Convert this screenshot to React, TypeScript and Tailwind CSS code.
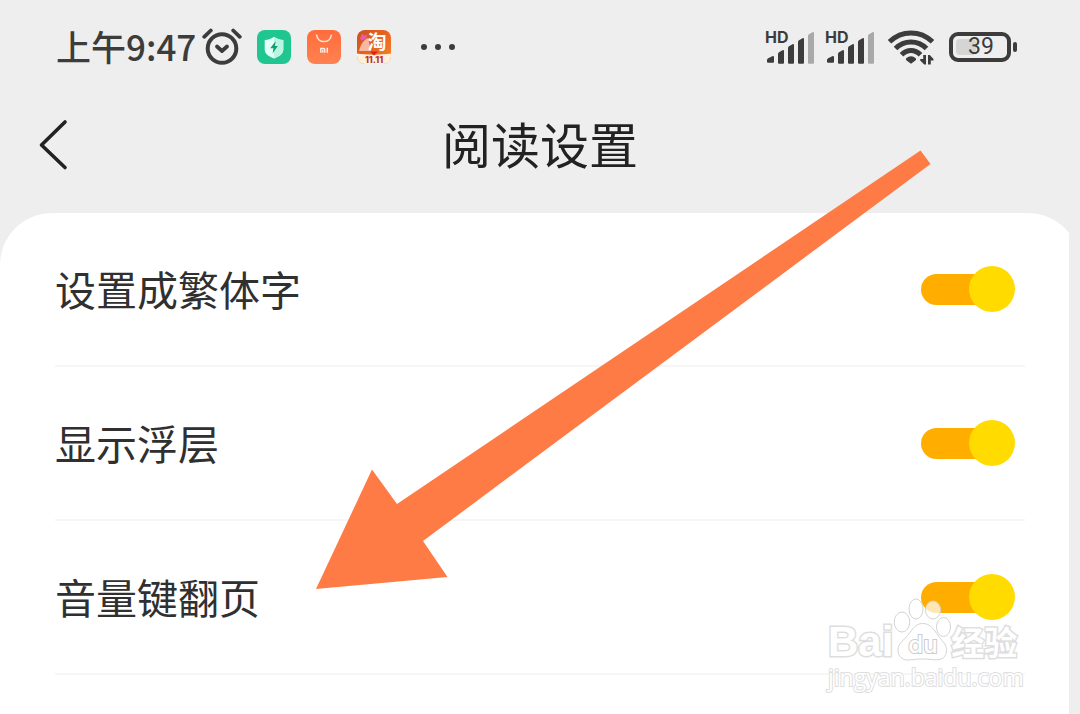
import { useId, useState } from "react";

const rows = ["设置成繁体字", "显示浮层", "音量键翻页"];

function AlarmIcon() {
  return (
    <svg viewBox="0 0 40 38" className="h-[38px] w-10 shrink-0" fill="none" stroke="#3c3c3c" strokeLinecap="round" strokeLinejoin="round" aria-hidden="true">
      <circle cx="20" cy="20.500" r="14.300" strokeWidth="4" />
      <path d="M15 18.500l5 4.500 5-4.500" strokeWidth="3.800" />
      <path d="M2.200 8.800L8.800 2.500M37.800 8.800L31.200 2.500" strokeWidth="3.800" />
    </svg>
  );
}

function ShieldApp() {
  return (
    <svg viewBox="0 0 34 34" className="size-[34px] shrink-0" aria-hidden="true">
      <rect width="34" height="34" rx="8" fill="#1fc68f" />
      <path d="M17 6.800c2.400 2 5.600 3 9.300 3.200v9.500c0 4.500-4.300 7-9.300 8.900-5-1.900-9.300-4.400-9.300-8.900V10c3.700-.2 6.900-1.200 9.300-3.200z" fill="#e4fff6" />
      <path d="M17 6.800c2.400 2 5.600 3 9.300 3.200v9.500c0 4.500-4.300 7-9.300 8.900z" fill="#b9f6e0" />
      <path d="M18.800 11l-5.600 7.200h3.300l-.9 5.200 5.200-7.300h-3z" fill="#149c73" />
    </svg>
  );
}

function StoreApp() {
  return (
    <svg viewBox="0 0 34 34" className="size-[34px] shrink-0" fill="none" aria-hidden="true">
      <defs>
        <linearGradient id="store" x1="0" y1="0" x2="0" y2="1">
          <stop offset="0" stopColor="#ff6c3c" />
          <stop offset="1" stopColor="#ff8250" />
        </linearGradient>
      </defs>
      <rect width="34" height="34" rx="8" fill="url(#store)" />
      <path d="M9.500 4.500c1 9.400 14 9.400 15 0" stroke="#ffe0d2" strokeWidth="1.600" />
      <path d="M13.800 22.800v-4.300h2.700c.9 0 1.300.4 1.300 1.200v3.100M15.800 20v2.800M20.300 17.800v5" stroke="#ffeee6" strokeWidth="1.400" />
    </svg>
  );
}

function TaobaoApp() {
  return (
    <svg viewBox="0 0 34 34" className="size-[34px] shrink-0 overflow-visible" aria-hidden="true">
      <defs>
        <linearGradient id="shop" x1="0" y1="0" x2="1" y2="1">
          <stop offset="0" stopColor="#c9501f" />
          <stop offset=".5" stopColor="#ea6420" />
          <stop offset="1" stopColor="#f58a2c" />
        </linearGradient>
        <clipPath id="shopClip">
          <rect width="34" height="34" rx="8" />
        </clipPath>
      </defs>
      <g clipPath="url(#shopClip)">
        <rect width="34" height="34" fill="url(#shop)" />
        <path d="M2 21C4 13 7 10 11 8l3 13z" fill="#f7b8a0" />
        <path d="M3 8.500l2-4.500 3 1.500 2-1-1 4-4 2z" fill="#e85bb0" />
        <path d="M0 23.500c8 1.500 26 1.500 34 0V34H0z" fill="#fff0dd" />
        <path d="M13 21.500h8l-4 4z" fill="#d9201c" />
      </g>
      <text x="20" y="19" textAnchor="middle" fill="#fff" fontFamily="Noto Sans CJK SC, sans-serif" fontWeight="700" fontSize="19">淘</text>
      <text x="17" y="33" textAnchor="middle" fill="#b8352a" fontFamily="Inter, sans-serif" fontWeight="800" fontSize="9">11.11</text>
    </svg>
  );
}

function Signal() {
  return (
    <div className="relative h-9 w-[50px] shrink-0">
      <span className="absolute top-0 left-0 font-['Inter',sans-serif] text-[16px] leading-[16px] font-bold">HD</span>
      <svg viewBox="0 0 50 36" className="size-full" fill="#3c3c3c" aria-hidden="true">
        <path d="M2 31q0-1.200 1.200-1.800l4-2q1.800-.7 1.800 1v4.500q0 1-1 1H3q-1 0-1-1z" />
        <path d="M13 25q0-1.200 1-1.800l3.500-2q1.500-.6 1.500 1v11.500q0 1-1 1h-4q-1 0-1-1z" />
        <path d="M23 19q0-1.200 1-1.800l3.500-2q1.500-.6 1.500 1v17.500q0 1-1 1h-4q-1 0-1-1z" />
        <path d="M33 13q0-1.200 1-1.800l3.500-2q1.500-.6 1.500 1v23.500q0 1-1 1h-4q-1 0-1-1z" />
        <path d="M43 7q0-1.200 1-1.800l3.500-2q1.500-.6 1.500 1v29.500q0 1-1 1h-4q-1 0-1-1z" fill="#a9a9a9" />
      </svg>
    </div>
  );
}

function WifiIcon() {
  return (
    <svg viewBox="0 0 46 36" className="h-9 w-[46px] shrink-0" fill="none" stroke="#3c3c3c" aria-hidden="true">
      <path d="M1.500 12.800C13.500.9 32.500.9 44.500 12.800" strokeWidth="5" />
      <path d="M7.500 19.500C16.200 10.800 29.800 10.800 38.500 19.500" strokeWidth="5" />
      <path d="M13.500 25.800C19.200 20 26.800 20 32.500 25.800" strokeWidth="5" />
      <path d="M18.300 29.300c2.600-2.800 6.800-2.800 9.400 0 .6.800.4 1.500-.3 2.200L23 34.800l-4.400-3.300c-.7-.7-.9-1.400-.3-2.200z" fill="#3c3c3c" stroke="none" />
      <path d="M35.200 26h2.800v9.500h-1.800l-4-4V30h3zM40 35.500V26h1.800l3.700 4v1.500h-2.700v4z" fill="#3c3c3c" stroke="none" />
    </svg>
  );
}

function Switch({ id }: { id: string }) {
  const [on, setOn] = useState(true);
  return (
    <input
      id={id}
      type="checkbox"
      role="switch"
      checked={on}
      onChange={(e) => setOn(e.target.checked)}
      className="grid h-[46px] w-[94px] shrink-0 cursor-pointer appearance-none items-center before:h-[31px] before:w-[80px] before:rounded-full before:bg-[#d4d4d4] before:content-[''] before:[grid-area:1/1] after:size-[46px] after:rounded-full after:bg-[#f2f2f2] after:content-[''] after:[grid-area:1/1] checked:before:bg-[#ffae00] checked:after:justify-self-end checked:after:bg-[#ffdb00]"
    />
  );
}

function SettingRow({ label }: { label: string }) {
  const id = useId();
  return (
    <li className="flex h-[154px] items-center justify-between border-b-2 border-[#f6f6f6] pr-[10px]">
      <label htmlFor={id} className="pb-[2px] text-[41px] leading-[60px] text-[#303030]">{label}</label>
      <Switch id={id} />
    </li>
  );
}

function Watermark() {
  return (
    <div className="pointer-events-none absolute top-[598px] right-[58px] w-[194px] text-white">
      <div className="flex h-[64px] items-end">
        <span className="font-['Liberation_Sans',sans-serif] text-[42px] leading-[40px] font-bold [-webkit-text-stroke:3px_#dedede] [paint-order:stroke_fill]">Bai</span>
        <div className="relative h-[64px] w-[58px] shrink-0">
          <svg viewBox="0 0 58 64" className="size-full" fill="#fff" fillOpacity=".7" stroke="#d4d4d4" aria-hidden="true">
            <ellipse cx="9" cy="24" rx="7.800" ry="10" />
            <ellipse cx="23" cy="11" rx="7" ry="10" />
            <ellipse cx="40" cy="12" rx="7.500" ry="9" />
            <ellipse cx="50.500" cy="29" rx="7" ry="9.500" />
            <path d="M29.500 25.500c-7 0-10 6-15 12-4 5-9.500 8-9.500 14.500 0 7 5 10.500 11 10 5-.5 8-1 13.500-1s8 .6 13 .8c7 .3 11-3 11-10 0-6-5-9-8-13.800-5-7-8-12.500-16-12.500z" />
          </svg>
          <span className="absolute bottom-[5px] left-[15px] font-['Inter',sans-serif] text-[24px] leading-[24px] font-medium [-webkit-text-stroke:2px_#cccccc] [paint-order:stroke_fill]">du</span>
        </div>
        <span className="text-[33px] leading-[42px] font-bold whitespace-nowrap [-webkit-text-stroke:3px_#dedede] [paint-order:stroke_fill]">经验</span>
      </div>
      <p className="font-['Open_Sans',sans-serif] text-[23px] leading-[30px] [-webkit-text-stroke:2px_#dedede] [paint-order:stroke_fill]">jingyan.baidu.com</p>
    </div>
  );
}

export default function App() {
  return (
    <div className="relative flex min-h-screen flex-col overflow-hidden bg-[#eeeeee] font-['Noto_Sans_CJK_SC',sans-serif]">
      <div className="flex h-[94px] items-center justify-between pr-[63px] pl-[56px] text-[#3c3c3c]">
        <div className="flex items-center">
          <time className="pb-[2px] text-[35px] leading-[50px] font-medium">上午9:47</time>
          <span className="ml-[6px]"><AlarmIcon /></span>
          <div className="ml-[15px] flex gap-4">
            <ShieldApp />
            <StoreApp />
            <TaobaoApp />
          </div>
          <div className="ml-[30px] flex gap-2">
            <i className="size-[6px] rounded-full bg-[#3c3c3c]" />
            <i className="size-[6px] rounded-full bg-[#3c3c3c]" />
            <i className="size-[6px] rounded-full bg-[#3c3c3c]" />
          </div>
        </div>
        <div className="flex items-center">
          <Signal />
          <span className="ml-[10px]"><Signal /></span>
          <span className="ml-[13px]"><WifiIcon /></span>
          <div className="ml-[15px] flex items-center gap-[2px]">
            <div className="relative flex h-[30px] w-[62px] items-center justify-center rounded-[9px] border-4 border-[#3c3c3c]">
              <i className="absolute top-[3px] left-[3px] h-4 w-5 rounded-[4px] bg-[#d5d5d5]" />
              <span className="relative pl-[2px] font-['Roboto',sans-serif] text-[23px] leading-[22px]">39</span>
            </div>
            <i className="h-[10px] w-1 rounded-sm bg-[#3c3c3c]" />
          </div>
        </div>
      </div>

      <header className="grid h-[119px] grid-cols-[1fr_auto_1fr] items-start px-[36px] pt-[14px]">
        <button type="button" aria-label="返回" className="mt-[10px] w-9">
          <svg viewBox="0 0 36 54" className="h-[54px] w-9" fill="none" stroke="#222" strokeWidth="3.600" strokeLinecap="round" strokeLinejoin="round" aria-hidden="true">
            <path d="M29 4L5.500 27 29 49.500" />
          </svg>
        </button>
        <h1 className="text-[49px] leading-[70px] text-[#222222]">阅读设置</h1>
      </header>

      <main className="mr-[11px] flex grow flex-col overflow-hidden">
        <div className="-mr-[11px] grow rounded-t-[52px] bg-white px-[55px]">
          <ul>
            {rows.map((label) => (
              <SettingRow key={label} label={label} />
            ))}
          </ul>
        </div>
      </main>

      <svg viewBox="0 0 616 440" className="pointer-events-none absolute top-[150px] left-[316px] h-[440px] w-[616px]" aria-hidden="true">
        <path d="M0 439L56 319.500 81 354 604.500 .5 614.500 14 107 391 131.500 427z" fill="#ff7b46" />
      </svg>
      <Watermark />
    </div>
  );
}
